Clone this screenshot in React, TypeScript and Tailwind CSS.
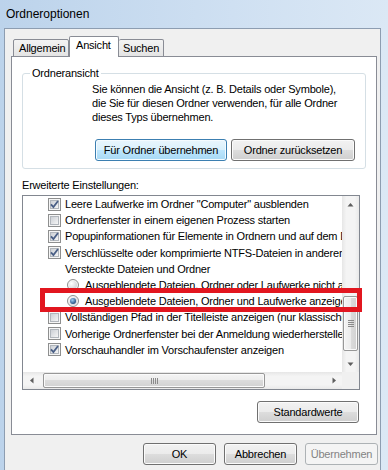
import React from "react";

type Row =
  | { kind: "check"; checked: boolean; text: string }
  | { kind: "radio"; checked: boolean; text: string }
  | { kind: "label"; text: string };

const rows: Row[] = [
  { kind: "check", checked: true, text: 'Leere Laufwerke im Ordner "Computer" ausblenden' },
  { kind: "check", checked: false, text: "Ordnerfenster in einem eigenen Prozess starten" },
  { kind: "check", checked: true, text: "Popupinformationen für Elemente in Ordnern und auf dem Desktop anzeigen" },
  { kind: "check", checked: true, text: "Verschlüsselte oder komprimierte NTFS-Dateien in anderer Farbe anzeigen" },
  { kind: "label", text: "Versteckte Dateien und Ordner" },
  { kind: "radio", checked: false, text: "Ausgeblendete Dateien, Ordner oder Laufwerke nicht anzeigen" },
  { kind: "radio", checked: true, text: "Ausgeblendete Dateien, Ordner und Laufwerke anzeigen" },
  { kind: "check", checked: false, text: "Vollständigen Pfad in der Titelleiste anzeigen (nur klassisches Design)" },
  { kind: "check", checked: false, text: "Vorherige Ordnerfenster bei der Anmeldung wiederherstellen" },
  { kind: "check", checked: true, text: "Vorschauhandler im Vorschaufenster anzeigen" },
];

const btn =
  "flex items-center justify-center h-[22px] rounded-[3px] border border-[#707070] bg-[linear-gradient(to_bottom,#f2f2f2_0%,#ebebeb_50%,#dddddd_50%,#cfcfcf_100%)] shadow-[inset_0_0_0_1px_#fbfbfb] leading-[14px]";

function CheckBox({ checked }: { checked: boolean }) {
  return (
    <svg width="13" height="13" viewBox="0 0 13 13" className="shrink-0">
      <defs>
        <linearGradient id="cbfill" x1="0" y1="0" x2="1" y2="1">
          <stop offset="0" stopColor="#c9cdd3" />
          <stop offset="1" stopColor="#f8f8f8" />
        </linearGradient>
      </defs>
      <rect x="0.5" y="0.5" width="12" height="12" fill="#f6f6f6" stroke="#8e8f8f" />
      <rect x="2.5" y="2.5" width="8" height="8" fill="url(#cbfill)" stroke="#b1b6bc" />
      {checked && (
        <path d="M3 6.3 L5.4 9 L10 3" fill="none" stroke="#4a5f86" strokeWidth="1.8" />
      )}
    </svg>
  );
}

function Radio({ checked }: { checked: boolean }) {
  return (
    <svg width="12" height="12" viewBox="0 0 12 12" className="shrink-0">
      <defs>
        <radialGradient id="rbfill" cx="0.3" cy="0.3" r="0.8">
          <stop offset="0" stopColor="#ffffff" />
          <stop offset="1" stopColor="#d0d3d8" />
        </radialGradient>
        <radialGradient id="rbdot" cx="0.4" cy="0.35" r="0.7">
          <stop offset="0" stopColor="#9fd0f5" />
          <stop offset="1" stopColor="#1c4678" />
        </radialGradient>
      </defs>
      <circle cx="6" cy="6" r="5.5" fill="#f4f4f4" stroke="#8e8f8f" />
      <circle cx="6" cy="6" r="4" fill="url(#rbfill)" />
      {checked && <circle cx="6" cy="6" r="3" fill="url(#rbdot)" />}
    </svg>
  );
}

function Arrow({ dir }: { dir: "up" | "down" | "left" | "right" }) {
  const d = {
    up: "M0.5 4.5 L3.5 1 L6.5 4.5 Z",
    down: "M0.5 1.5 L3.5 5 L6.5 1.5 Z",
    left: "M4.5 0.5 L1 3.5 L4.5 6.5 Z",
    right: "M1.5 0.5 L5 3.5 L1.5 6.5 Z",
  }[dir];
  const size = dir === "up" || dir === "down" ? { w: 7, h: 6 } : { w: 6, h: 7 };
  return (
    <svg width={size.w} height={size.h} viewBox={`0 0 ${size.w} ${size.h}`}>
      <path d={d} fill="#5e5e5e" />
    </svg>
  );
}

export default function App() {
  return (
    <div className="relative w-[388px] h-[470px] overflow-hidden bg-[linear-gradient(to_right,#bcd3eb,#cfe0f2_60%,#dbe8f5)] font-['Liberation_Sans',Arial,sans-serif] text-black">
      {/* title bar */}
      <div className="h-[28px] pl-[6px] flex items-center text-[12px]">Ordneroptionen</div>

      <div className="ml-[4px] w-[377px] h-[442px] bg-[#f0f0f0] border-l border-t border-r border-[#8d9db1] flex flex-col text-[11px] tracking-[-0.2px]">
        {/* tabs */}
        <div className="relative z-10 -mb-px flex items-end pl-[8px] pt-[6px] h-[28px]">
          <div className="w-[56px] h-[18px] border border-[#898c95] rounded-t-[2px] bg-[linear-gradient(to_bottom,#f3f3f3,#e4e4e4)] flex items-center pl-[5px] leading-[14px]">
            Allgemein
          </div>
          <div className="w-[50px] h-[21px] border border-b-0 border-[#898c95] rounded-t-[2px] bg-white pt-[1px] pl-[6px] leading-[14px]">
            Ansicht
          </div>
          <div className="w-[45px] h-[18px] border border-l-0 border-[#898c95] rounded-t-[2px] bg-[linear-gradient(to_bottom,#f3f3f3,#e4e4e4)] flex items-center pl-[4px] leading-[14px]">
            Suchen
          </div>
        </div>

        {/* tab panel */}
        <div className="ml-[6px] w-[366px] h-[379px] bg-white border border-[#898c95] flex flex-col">
          <div className="relative mt-[16px] ml-[10px] w-[344px] h-[96px] border border-[#d5dfe5] rounded-[3px]">
            <div className="absolute left-[7px] -top-[8px] bg-white px-[2px] leading-[14px]">Ordneransicht</div>
            <div className="pl-[69px] pt-[8px] leading-[14px]">
              <div>Sie können die Ansicht (z. B. Details oder Symbole),</div>
              <div>die Sie für diesen Ordner verwenden, für alle Ordner</div>
              <div>dieses Typs übernehmen.</div>
            </div>
            <div className="mt-[15px] ml-[72px] flex gap-[4px]">
              <div className="flex items-center justify-center w-[132px] h-[22px] rounded-[3px] border border-[#3c7fb1] bg-[linear-gradient(to_bottom,#eaf6fd_0%,#d9f0fc_50%,#bee6fd_50%,#a7d9f5_100%)] shadow-[inset_0_0_0_1px_#f4fbff] leading-[14px]">
                Für Ordner übernehmen
              </div>
              <div className={`${btn} w-[124px]`}>Ordner zurücksetzen</div>
            </div>
          </div>

          <div className="mt-[9px] ml-[10px] leading-[14px]">Erweiterte Einstellungen:</div>

          {/* list box */}
          <div className="mt-[3px] ml-[10px] w-[338px] h-[195px] border border-[#828790] flex flex-col">
            <div className="flex h-[176px]">
              <div className="w-[319px] overflow-hidden">
                {rows.map((r, i) => (
                  <div key={i} className="h-[16.2px] flex items-center whitespace-nowrap leading-[14px]">
                    {r.kind === "check" && (
                      <>
                        <span className="ml-[25px] flex">
                          <CheckBox checked={r.checked} />
                        </span>
                        <span className="ml-[4px]">{r.text}</span>
                      </>
                    )}
                    {r.kind === "radio" && (
                      <>
                        <span className="ml-[44px] flex">
                          <Radio checked={r.checked} />
                        </span>
                        <span className="ml-[6px]">{r.text}</span>
                      </>
                    )}
                    {r.kind === "label" && <span className="ml-[42px]">{r.text}</span>}
                  </div>
                ))}
              </div>
              {/* vertical scrollbar */}
              <div className="w-[17px] flex flex-col bg-[linear-gradient(to_right,#e6e6e6,#f4f4f4_25%,#f4f4f4_75%,#e9e9e9)]">
                <div className="h-[17px] flex items-center justify-center">
                  <Arrow dir="up" />
                </div>
                <div className="mt-[83px] mx-[1px] h-[55px] rounded-[2px] border border-[#979797] bg-[linear-gradient(to_right,#f4f4f4,#ececec_50%,#dcdcdc_50%,#d2d2d2)] shadow-[inset_0_0_0_1px_#fafafa] flex flex-col items-center justify-center gap-[1px]">
                  <div className="w-[6px] h-px bg-[#8a8a8a]" />
                  <div className="w-[6px] h-px bg-[#8a8a8a]" />
                  <div className="w-[6px] h-px bg-[#8a8a8a]" />
                  <div className="w-[6px] h-px bg-[#8a8a8a]" />
                </div>
                <div className="mt-auto h-[17px] flex items-center justify-center">
                  <Arrow dir="down" />
                </div>
              </div>
            </div>
            <div className="flex h-[17px]">
              {/* horizontal scrollbar */}
              <div className="w-[319px] flex bg-[linear-gradient(to_bottom,#e6e6e6,#f4f4f4_25%,#f4f4f4_75%,#e9e9e9)]">
                <div className="w-[17px] flex items-center justify-center">
                  <Arrow dir="left" />
                </div>
                <div className="ml-[3px] my-[1px] w-[222px] rounded-[2px] border border-[#979797] bg-[linear-gradient(to_bottom,#f4f4f4,#ececec_50%,#dcdcdc_50%,#d2d2d2)] shadow-[inset_0_0_0_1px_#fafafa] flex items-center justify-center gap-[1px]">
                  <div className="w-px h-[6px] bg-[#8a8a8a]" />
                  <div className="w-px h-[6px] bg-[#8a8a8a]" />
                  <div className="w-px h-[6px] bg-[#8a8a8a]" />
                  <div className="w-px h-[6px] bg-[#8a8a8a]" />
                </div>
                <div className="ml-auto w-[17px] flex items-center justify-center">
                  <Arrow dir="right" />
                </div>
              </div>
              <div className="w-[17px] bg-[#f0f0f0]" />
            </div>
          </div>

          <div className="mt-[11px] mr-[17px] flex justify-end">
            <div className={`${btn} w-[102px]`}>Standardwerte</div>
          </div>
        </div>

        {/* dialog buttons */}
        <div className="mt-[8px] pr-[2px] flex justify-end gap-[8px]">
          <div className={`${btn} w-[73px]`}>OK</div>
          <div className={`${btn} w-[73px]`}>Abbrechen</div>
          <div className="flex items-center justify-center w-[73px] h-[22px] rounded-[3px] border border-[#adb2b5] bg-[#f4f4f4] text-[#838383] leading-[14px]">
            Übernehmen
          </div>
        </div>
      </div>

      {/* red highlight annotation */}
      <div className="absolute left-[40px] top-[288px] w-[322px] h-[24px] border-[5px] border-[#e2161f]" />
    </div>
  );
}
